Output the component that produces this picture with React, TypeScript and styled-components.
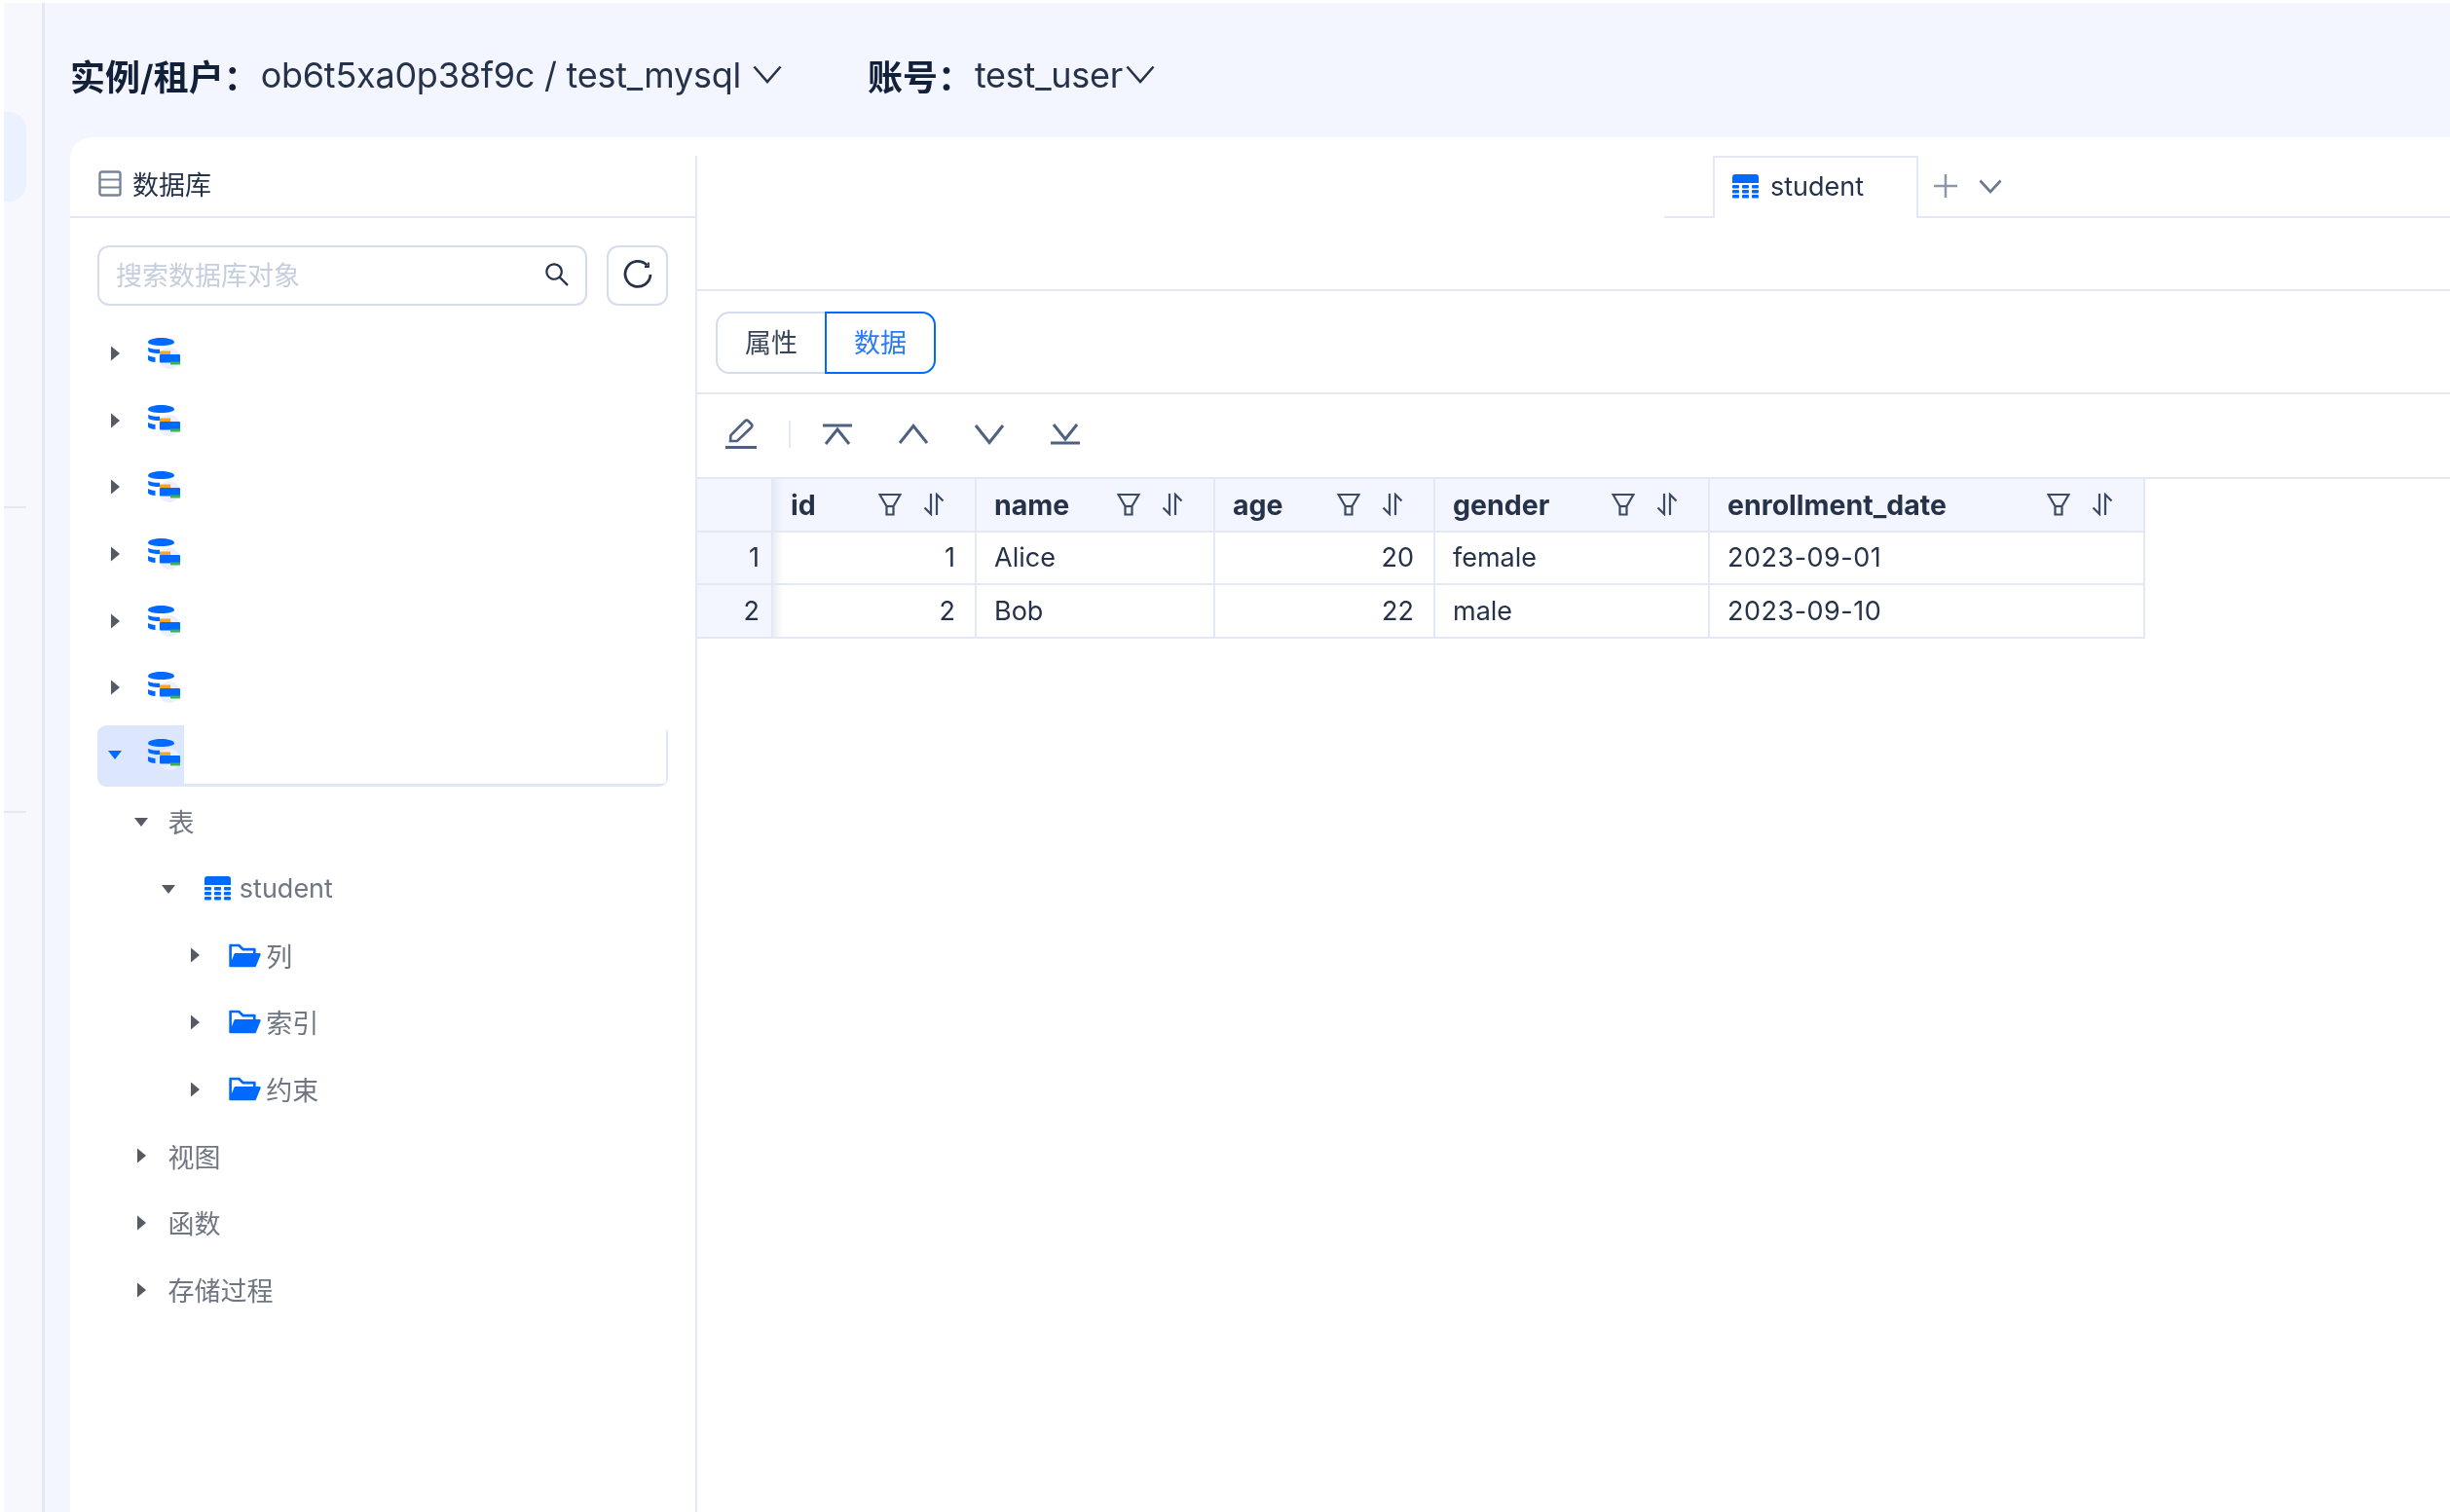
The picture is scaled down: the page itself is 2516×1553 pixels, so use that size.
import React from 'react';
import styled, { createGlobalStyle } from 'styled-components';
import { AiFillFolderOpen, AiOutlineSearch } from 'react-icons/ai';

const GlobalStyle = createGlobalStyle`
  * { box-sizing: border-box; }
  html, body { margin: 0; padding: 0; background: #fff; overflow: hidden; }
  body { font-family: Inter, "Noto Sans CJK SC", sans-serif; color: #132039; }
`;

const BORDER = '#e3e8f4';
const PAGE_BG = '#f3f6fe';
const BLUE = '#0069ff';

const Page = styled.div`
  width: 2516px;
  height: 1553px;
  padding: 3px 0 0 4px;
  display: flex;
  overflow: hidden;
  filter: blur(0.6px);
`;

const Rail = styled.nav`
  width: 42px;
  flex: none;
  background: #f6f8fe;
  border-right: 3px solid ${BORDER};
  display: flex;
  flex-direction: column;
`;

const RailPill = styled.div`
  width: 23px;
  height: 92px;
  margin-top: 112px;
  background: #ebf1fe;
  border-radius: 0 18px 18px 0;
`;

const RailRule = styled.div<{ $top: number }>`
  width: 23px;
  height: 2px;
  margin-top: ${p => p.$top}px;
  background: ${BORDER};
`;

const Main = styled.main`
  flex: 1;
  min-width: 0;
  background: ${PAGE_BG};
  display: flex;
  flex-direction: column;
  padding-left: 26px;
`;

const TopBar = styled.header`
  height: 138px;
  flex: none;
  padding-top: 9px;
  display: flex;
  align-items: center;
  font-size: 36px;
  white-space: nowrap;
`;

const TopLabel = styled.span`
  font-weight: 600;
  font-size: 36px;
  margin-right: 2px;
`;

const TopValue = styled.span`
  color: #26324a;
  letter-spacing: -0.25px;
`;

const TopGroup = styled.div<{ $gap?: number }>`
  display: flex;
  align-items: center;
  margin-right: ${p => p.$gap ?? 0}px;
`;

const Card = styled.section`
  flex: 1;
  min-height: 0;
  background: #fff;
  border-radius: 22px 0 0 0;
  padding-top: 19px;
  display: flex;
`;

const Sidebar = styled.aside`
  width: 644px;
  flex: none;
  border-right: 2px solid ${BORDER};
`;

const SideHead = styled.div`
  height: 64px;
  margin-right: -2px;
  padding: 0 0 6px 29px;
  border-bottom: 2px solid ${BORDER};
  display: flex;
  align-items: center;
  gap: 11px;
  font-size: 27px;
  color: #26324a;
`;

const SearchRow = styled.div`
  margin: 28px 28px 19px 28px;
  display: flex;
  gap: 20px;
`;

const SearchBox = styled.div`
  width: 503px;
  height: 62px;
  padding: 0 14px 3px 17px;
  border: 2px solid #d5dcec;
  border-radius: 12px;
  display: flex;
  align-items: center;
  justify-content: space-between;
  font-size: 27px;
  color: #c6cede;
`;

const RefreshButton = styled.button`
  width: 63px;
  height: 62px;
  padding: 0 0 3px;
  background: #fff;
  border: 2px solid #d5dcec;
  border-radius: 12px;
  display: flex;
  align-items: center;
  justify-content: center;
`;

const Tree = styled.div`
  padding: 0 28px 0 28px;
  display: flex;
  flex-direction: column;
  gap: 5.7px;
`;

const TreeRow = styled.div<{ $level: number; $selected?: boolean }>`
  height: 63px;
  padding-left: ${p => p.$level * 27.4}px;
  padding-bottom: 3px;
  display: flex;
  align-items: center;
  font-size: 27px;
  color: #6f7682;
  border-radius: 9px;
  background: ${p => (p.$selected ? '#dce7fd' : 'transparent')};
`;

const Switcher = styled.span`
  width: 36px;
  flex: none;
  display: flex;
  justify-content: center;
`;

const RowSlot = styled.span<{ $left: number; $right?: number }>`
  display: flex;
  flex: none;
  margin-left: ${p => p.$left}px;
  margin-right: ${p => p.$right ?? 0}px;
`;

const RedactBlock = styled.div`
  align-self: stretch;
  flex: 1;
  margin: 0 2px 0 3px;
  background: #fff;
  border-radius: 0 4px 4px 0;
`;

const Pane = styled.div`
  flex: 1;
  min-width: 0;
  display: flex;
  flex-direction: column;
`;

const TabBar = styled.div`
  height: 64px;
  flex: none;
  padding-left: 993px;
  display: flex;
`;

const TabLead = styled.div`
  width: 50px;
  border-bottom: 2px solid ${BORDER};
`;

const Tab = styled.div`
  width: 211px;
  padding: 0 0 3px 18px;
  border: 2px solid ${BORDER};
  border-bottom: none;
  display: flex;
  align-items: center;
  gap: 12px;
  font-size: 27px;
  color: #26324a;
`;

const TabRest = styled.div`
  flex: 1;
  padding-left: 16px;
  border-bottom: 2px solid ${BORDER};
  display: flex;
  align-items: center;
  gap: 22px;
`;

const EmptyBand = styled.div`
  height: 75px;
  flex: none;
  border-bottom: 2px solid ${BORDER};
`;

const SegmentBand = styled.div`
  height: 106px;
  flex: none;
  padding: 21px 0 0 19px;
  border-bottom: 2px solid ${BORDER};
`;

const Segmented = styled.div`
  width: 226px;
  height: 64px;
  display: flex;
`;

const Segment = styled.div<{ $active?: boolean }>`
  flex: 1;
  padding-bottom: 3px;
  display: flex;
  align-items: center;
  justify-content: center;
  font-size: 27px;
  border: 2px solid ${p => (p.$active ? BLUE : '#d5dcec')};
  border-right-width: ${p => (p.$active ? 2 : 0)}px;
  border-radius: ${p => (p.$active ? '0 14px 14px 0' : '14px 0 0 14px')};
  color: ${p => (p.$active ? '#2a7bf5' : '#3a4456')};
`;

const Toolbar = styled.div`
  height: 87px;
  flex: none;
  padding: 0 0 3px 28px;
  border-bottom: 2px solid ${BORDER};
  display: flex;
  align-items: center;
`;

const ToolSep = styled.div`
  width: 2px;
  height: 28px;
  margin: 0 9px 0 32px;
  background: ${BORDER};
`;

const ToolIcon = styled.span`
  width: 78px;
  display: flex;
  justify-content: center;
`;

const Grid = styled.div`
  width: 1487px;
  display: grid;
  grid-template-columns: 78px 209px 245px 226px 282px 447px;
  grid-auto-rows: 54.6px;
`;

const Cell = styled.div<{ $right?: boolean; $shade?: boolean }>`
  position: relative;
  padding: 0 ${p => (p.$right ? 20 : 18)}px 0 18px;
  border-right: 2px solid ${BORDER};
  border-bottom: 2px solid ${BORDER};
  display: flex;
  align-items: center;
  justify-content: ${p => (p.$right ? 'flex-end' : 'flex-start')};
  font-size: 27px;
  color: #26324a;
  background: ${p => (p.$shade ? PAGE_BG : '#fff')};
`;

const DateCell = styled(Cell)`
  letter-spacing: 0.5px;
`;

const IndexCell = styled(Cell)`
  padding: 0 12px;
  z-index: 1;
  &::after {
    content: '';
    position: absolute;
    top: 0;
    bottom: 0;
    left: 100%;
    margin-left: 2px;
    width: 10px;
    background: linear-gradient(90deg, rgba(220, 226, 240, 0.6), rgba(255, 255, 255, 0));
  }
`;

const HeadCell = styled(Cell)`
  padding: 0 30px 0 18px;
  justify-content: space-between;
  background: ${PAGE_BG};
  font-size: 28.5px;
  font-weight: 700;
`;

const HeadTools = styled.span`
  display: flex;
  align-items: center;
  gap: 21px;
`;

function Caret({ open, color = '#555a63' }: { open?: boolean; color?: string }) {
  return (
    <svg width="16" height="16" viewBox="0 0 16 16">
      <path d={open ? 'M1 4h14L8 13z' : 'M4 0.5v15L13 8z'} fill={color} />
    </svg>
  );
}

function DbIcon() {
  return (
    <svg width="35" height="32" viewBox="0 0 35 32">
      <path d="M1 4.500C1 1.500 8 0 14.500 0S28 1.500 28 4.500c0 2.200-6 3.500-13.500 3.500S1 6.700 1 4.500z" fill={BLUE} />
      <path d="M1 10c3 1.300 7 1.800 12 1.800v4.200c-5 0-9-.5-11.500-2z" fill={BLUE} />
      <path d="M1 18c2 1.200 4.500 1.800 7.500 2v5c-3.500 0-6.500-.8-7.500-2.400z" fill={BLUE} />
      <circle cx="23" cy="21" r="11" fill="#eaf0fe" />
      <rect x="13" y="13.500" width="11" height="3.500" fill="#f5a623" />
      <rect x="13" y="17" width="21" height="8.500" rx="1" fill={BLUE} />
      <rect x="24" y="24.500" width="10" height="3" fill="#3cb44a" />
    </svg>
  );
}

function TableIcon() {
  const dots = [];
  for (let row = 0; row < 3; row++) {
    for (let col = 0; col < 3; col++) {
      dots.push(<rect key={`${row}-${col}`} x={col * 10} y={11 + row * 5} width="7" height="3.500" rx="1" fill={BLUE} />);
    }
  }
  return (
    <svg width="27" height="25" viewBox="0 0 27 25">
      <path d="M3 0h21a3 3 0 0 1 3 3v6H0V3a3 3 0 0 1 3-3z" fill={BLUE} />
      {dots}
    </svg>
  );
}

function Chevron({ width = 30, height = 19, color = '#26324a' }: { width?: number; height?: number; color?: string }) {
  return (
    <svg width={width} height={height} viewBox={`0 0 ${width} ${height}`} fill="none">
      <path d={`M1.500 1.500L${width / 2} ${height - 2}L${width - 1.500} 1.500`} stroke={color} strokeWidth="2.600" />
    </svg>
  );
}

function FilterIcon() {
  return (
    <svg width="24" height="24" viewBox="0 0 24 24" fill="none" stroke="#3c4a63" strokeWidth="2.200">
      <path d="M1.500 2h21L15.500 14v8.500h-7V14z" />
      <path d="M8.500 14h7" />
    </svg>
  );
}

function SortIcon() {
  return (
    <svg width="24" height="24" viewBox="0 0 24 24" fill="none" stroke="#3c4a63" strokeWidth="2.200">
      <path d="M9 1v21L2.500 15.500" />
      <path d="M15 23V2l6.500 6.500" />
    </svg>
  );
}

function EditIcon() {
  return (
    <svg width="34" height="32" viewBox="0 0 34 32" fill="none" stroke="#4f6080" strokeWidth="2.600">
      <path d="M1 29.500h32" strokeWidth="3" />
      <path d="M6 23l.5-6L21 2.500a2.500 2.500 0 0 1 3.500 0l3 3a2.500 2.500 0 0 1 0 3.500L13 23z" />
    </svg>
  );
}

function MoveIcon({ kind }: { kind: 'top' | 'up' | 'down' | 'bottom' }) {
  const paths = {
    top: 'M1 3h30M4 22L16 7l12 15',
    up: 'M2 21L16 3.500l14 17.500',
    down: 'M2 3l14 17.500L30 3',
    bottom: 'M4 2l12 15L28 2M1 21h30',
  };
  return (
    <svg width="32" height="24" viewBox="0 0 32 24" fill="none" stroke="#4f6080" strokeWidth="3">
      <path d={paths[kind]} />
    </svg>
  );
}

function RefreshIcon() {
  return (
    <svg width="30" height="30" viewBox="0 0 30 30" fill="none" stroke="#26324a" strokeWidth="2.800">
      <path d="M24.500 5.500A13 13 0 1 0 28 15" />
      <path d="M26 2.500v4.500h-4" strokeWidth="1.800" />
    </svg>
  );
}

function DbTitleIcon() {
  return (
    <svg width="24" height="27" viewBox="0 0 24 27" fill="none" stroke="#77839b" strokeWidth="2.400">
      <rect x="1.500" y="1.500" width="21" height="24" rx="2" />
      <path d="M1.500 9.500h21M1.500 17.500h21" strokeWidth="2" />
    </svg>
  );
}

const columns = ['id', 'name', 'age', 'gender', 'enrollment_date'];

const rows = [
  { index: 1, id: 1, name: 'Alice', age: 20, gender: 'female', date: '2023-09-01' },
  { index: 2, id: 2, name: 'Bob', age: 22, gender: 'male', date: '2023-09-10' },
];

export default function App() {
  return (
    <>
      <GlobalStyle />
      <Page lang="zh-CN">
        <Rail>
          <RailPill />
          <RailRule $top={313} />
          <RailRule $top={311} />
        </Rail>
        <Main>
          <TopBar>
            <TopGroup $gap={88}>
              <TopLabel>实例/租户：</TopLabel>
              <TopValue>ob6t5xa0p38f9c / test_mysql</TopValue>
              <RowSlot $left={12}><Chevron /></RowSlot>
            </TopGroup>
            <TopGroup>
              <TopLabel>账号：</TopLabel>
              <TopValue>test_user</TopValue>
              <RowSlot $left={3}><Chevron /></RowSlot>
            </TopGroup>
          </TopBar>
          <Card>
            <Sidebar>
              <SideHead>
                <DbTitleIcon />
                数据库
              </SideHead>
              <SearchRow>
                <SearchBox>
                  搜索数据库对象
                  <AiOutlineSearch size={30} color="#26324a" />
                </SearchBox>
                <RefreshButton>
                  <RefreshIcon />
                </RefreshButton>
              </SearchRow>
              <Tree>
                {[0, 1, 2, 3, 4, 5].map(i => (
                  <TreeRow key={i} $level={0}>
                    <Switcher><Caret /></Switcher>
                    <RowSlot $left={15}><DbIcon /></RowSlot>
                  </TreeRow>
                ))}
                <TreeRow $level={0} $selected>
                  <Switcher><Caret open color={BLUE} /></Switcher>
                  <RowSlot $left={15}><DbIcon /></RowSlot>
                  <RedactBlock />
                </TreeRow>
                <TreeRow $level={1}>
                  <Switcher><Caret open /></Switcher>
                  <RowSlot $left={9}>表</RowSlot>
                </TreeRow>
                <TreeRow $level={2}>
                  <Switcher><Caret open /></Switcher>
                  <RowSlot $left={19} $right={9}><TableIcon /></RowSlot>
                  student
                </TreeRow>
                {['列', '索引', '约束'].map(name => (
                  <TreeRow key={name} $level={3}>
                    <Switcher><Caret /></Switcher>
                    <RowSlot $left={15} $right={3}>
                      <AiFillFolderOpen size={37} color={BLUE} />
                    </RowSlot>
                    {name}
                  </TreeRow>
                ))}
                {['视图', '函数', '存储过程'].map(name => (
                  <TreeRow key={name} $level={1}>
                    <Switcher><Caret /></Switcher>
                    <RowSlot $left={9}>{name}</RowSlot>
                  </TreeRow>
                ))}
              </Tree>
            </Sidebar>
            <Pane>
              <TabBar>
                <TabLead />
                <Tab>
                  <TableIcon />
                  student
                </Tab>
                <TabRest>
                  <svg width="24" height="24" viewBox="0 0 24 24" stroke="#8d97aa" strokeWidth="2.500">
                    <path d="M0 12h24M12 0v24" />
                  </svg>
                  <Chevron width={24} height={15} color="#6d7890" />
                </TabRest>
              </TabBar>
              <EmptyBand />
              <SegmentBand>
                <Segmented>
                  <Segment>属性</Segment>
                  <Segment $active>数据</Segment>
                </Segmented>
              </SegmentBand>
              <Toolbar>
                <EditIcon />
                <ToolSep />
                <ToolIcon><MoveIcon kind="top" /></ToolIcon>
                <ToolIcon><MoveIcon kind="up" /></ToolIcon>
                <ToolIcon><MoveIcon kind="down" /></ToolIcon>
                <ToolIcon><MoveIcon kind="bottom" /></ToolIcon>
              </Toolbar>
              <Grid>
                <IndexCell $shade />
                {columns.map(col => (
                  <HeadCell key={col}>
                    {col}
                    <HeadTools>
                      <FilterIcon />
                      <SortIcon />
                    </HeadTools>
                  </HeadCell>
                ))}
                {rows.map(row => (
                  <React.Fragment key={row.index}>
                    <IndexCell $shade $right>{row.index}</IndexCell>
                    <Cell $right>{row.id}</Cell>
                    <Cell>{row.name}</Cell>
                    <Cell $right>{row.age}</Cell>
                    <Cell>{row.gender}</Cell>
                    <DateCell>{row.date}</DateCell>
                  </React.Fragment>
                ))}
              </Grid>
            </Pane>
          </Card>
        </Main>
      </Page>
    </>
  );
}
